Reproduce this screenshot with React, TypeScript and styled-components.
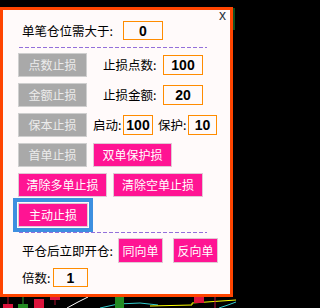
import React from 'react'
import styled, { createGlobalStyle } from 'styled-components'

const Global = createGlobalStyle`
  html, body {
    margin: 0;
    padding: 0;
    background-color: #000;
  }
  * {
    box-sizing: border-box;
  }
`

const Chart = () => (
  <ChartSvg width="236" height="308" viewBox="0 0 236 308">
    <line x1="234" y1="8" x2="234" y2="30" stroke="#1f9a3a" strokeWidth="1" />
    <line x1="8" y1="297" x2="8" y2="304" stroke="#b01030" strokeWidth="1" />
    <rect x="3" y="304" width="10" height="4" fill="#dc143c" />
    <line x1="23" y1="297" x2="23" y2="304" stroke="#2a9a2a" strokeWidth="1" />
    <rect x="18" y="304" width="10" height="4" fill="#228b22" />
    <rect x="34" y="299" width="10" height="9" fill="#dc143c" />
    <line x1="55" y1="297" x2="55" y2="305" stroke="#b01030" strokeWidth="1" />
    <rect x="50" y="297" width="10" height="3" fill="#dc143c" />
    <polyline points="67,308 78,302 88,297" fill="none" stroke="#fff" strokeWidth="1" />
    <polyline points="100,308 118,304 140,303 158,305" fill="none" stroke="#3cc" strokeWidth="1" />
    <rect x="115" y="297" width="9" height="11" fill="#228b22" />
    <polyline points="150,306 192,305 192,303 236,300" fill="none" stroke="#ff0" strokeWidth="1" />
    <rect x="194" y="297" width="10" height="6" fill="#dc143c" />
    <line x1="215" y1="297" x2="215" y2="308" stroke="#c01040" strokeWidth="1" />
    <polyline points="219,308 228,305 236,302" fill="none" stroke="#3cc" strokeWidth="1" />
  </ChartSvg>
)

const App = () => {
  return (
    <Screen>
      <Global />
      <Chart />
      <Panel>
        <Close>x</Close>

        <Row $mt={0} $indent={4}>
          <Label $w={101}>单笔仓位需大于:</Label>
          <Field $w={40} $h={19} defaultValue="0" />
        </Row>

        <Dash $mt={7} />

        <Row $mt={5}>
          <Button $tone="gray" $w={69}>点数止损</Button>
          <Label $w={60} $ml={16}>止损点数:</Label>
          <Field $w={40} $h={20} defaultValue="100" />
        </Row>

        <Row $mt={6}>
          <Button $tone="gray" $w={69}>金额止损</Button>
          <Label $w={60} $ml={16}>止损金额:</Label>
          <Field $w={40} $h={20} defaultValue="20" />
        </Row>

        <Row $mt={6}>
          <Button $tone="gray" $w={69}>保本止损</Button>
          <Label $w={30} $ml={6}>启动:</Label>
          <Field $w={30} $h={20} defaultValue="100" />
          <Label $w={30} $ml={5}>保护:</Label>
          <Field $w={29} $h={20} defaultValue="10" />
        </Row>

        <Row $mt={6}>
          <Button $tone="gray" $w={69}>首单止损</Button>
          <Button $tone="pink" $w={79} $ml={6}>双单保护损</Button>
        </Row>

        <Row $mt={6}>
          <Button $tone="pink" $w={89}>清除多单止损</Button>
          <Button $tone="pink" $w={90} $ml={6}>清除空单止损</Button>
        </Row>

        <Row $mt={6}>
          <Button $tone="pink" $w={70} $focused>主动止损</Button>
        </Row>

        <Dash $mt={5} />

        <Row $mt={5} $indent={4}>
          <Label $w={96}>平仓后立即开仓:</Label>
          <Button $tone="pink" $w={45} $h={25}>同向单</Button>
          <Button $tone="pink" $w={45} $h={25} $ml={10}>反向单</Button>
        </Row>

        <Row $mt={5} $indent={4}>
          <Label $w={31}>倍数:</Label>
          <Field $w={35} $h={19} defaultValue="1" />
        </Row>
      </Panel>
    </Screen>
  )
}

export default App

const Screen = styled.div`
  position: relative;
  width: 236px;
  height: 308px;
  overflow: hidden;
  background-color: #000;
  padding-top: 7px;
`
const ChartSvg = styled.svg`
  position: absolute;
  left: 0;
  top: 0;
  display: block;
`
const Panel = styled.div`
  position: relative;
  z-index: 1;
  width: 233px;
  height: 290px;
  border: 3px solid #ff4500;
  background-color: #fffafa;
  padding: 11px 0 0 15px;
  display: flex;
  flex-direction: column;
  font-family: "Noto Sans CJK SC", "Noto Sans", sans-serif;
`
const Close = styled.div`
  position: absolute;
  top: -2px;
  right: 4px;
  font-family: "Liberation Sans", Arial, sans-serif;
  font-size: 14px;
  line-height: 14px;
  color: #2b3440;
  cursor: pointer;
`
const Row = styled.div<{ $mt: number; $indent?: number }>`
  display: flex;
  align-items: center;
  margin-top: ${({ $mt }) => $mt}px;
  padding-left: ${({ $indent }) => $indent ?? 0}px;
`
const Label = styled.span<{ $w: number; $ml?: number }>`
  flex: none;
  width: ${({ $w }) => $w}px;
  margin-left: ${({ $ml }) => $ml ?? 0}px;
  font-size: 12.5px;
  line-height: 16px;
  color: #000;
  white-space: nowrap;
`
const Field = styled.input<{ $w: number; $h: number }>`
  flex: none;
  width: ${({ $w }) => $w}px;
  height: ${({ $h }) => $h}px;
  border: 1px solid #ff8c00;
  background-color: #fffafa;
  padding: 0;
  margin: 0;
  text-align: center;
  font-family: "Liberation Sans", Arial, sans-serif;
  font-weight: bold;
  font-size: 14px;
  color: #000;
  outline: none;
`
const Button = styled.button<{ $tone: 'gray' | 'pink'; $w: number; $h?: number; $ml?: number; $focused?: boolean }>`
  flex: none;
  width: ${({ $w }) => $w}px;
  height: ${({ $h }) => $h ?? 24}px;
  margin: 0 0 0 ${({ $ml }) => $ml ?? 0}px;
  padding: 0;
  border: 1px solid ${({ $tone }) => ($tone === 'pink' ? '#e0c8d4' : '#cfcfcf')};
  background-color: ${({ $tone }) => ($tone === 'pink' ? '#ff1493' : '#a9a9a9')};
  color: ${({ $tone }) => ($tone === 'pink' ? '#fff' : '#ececec')};
  font-family: "Noto Sans CJK SC", "Noto Sans", sans-serif;
  font-size: 12px;
  line-height: 16px;
  white-space: nowrap;
  cursor: pointer;
  outline: ${({ $focused }) => ($focused ? '4px solid #3d8fe0' : 'none')};
  outline-offset: 1px;
`
const Dash = styled.div<{ $mt: number }>`
  flex: none;
  width: 188px;
  height: 1px;
  margin: ${({ $mt }) => $mt}px 0 0 1px;
  background-image: repeating-linear-gradient(to right, #9370db 0 4px, transparent 4px 6px);
`
